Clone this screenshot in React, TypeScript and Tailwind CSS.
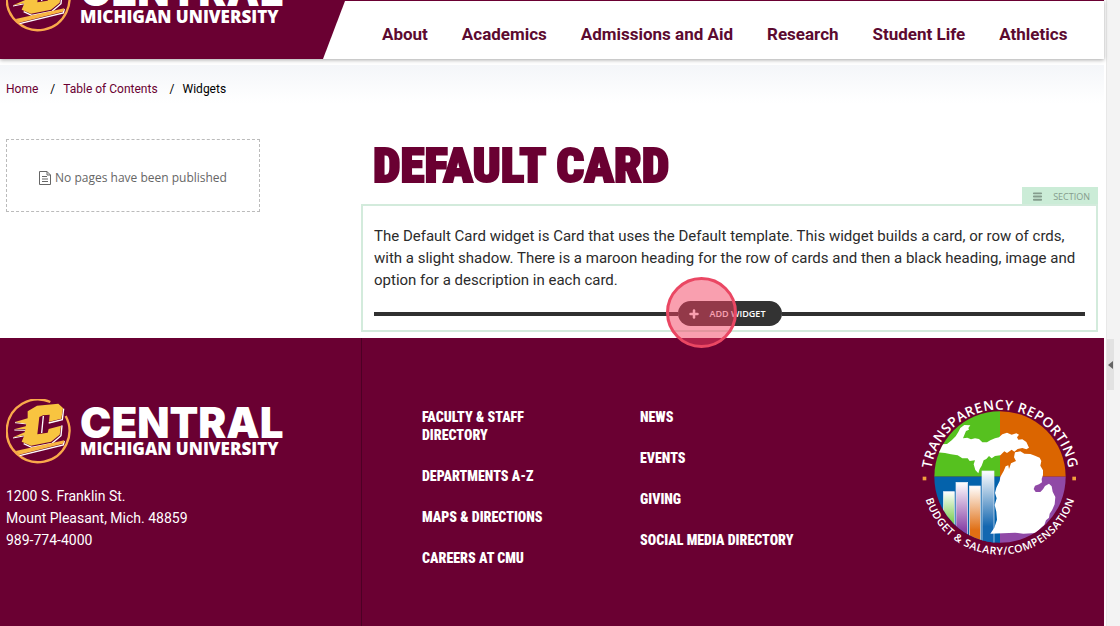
import React from 'react';
import { Menu, Plus } from 'lucide-react';

const navItems = ['About', 'Academics', 'Admissions and Aid', 'Research', 'Student Life', 'Athletics'];

const footerLinks = [
  ['Faculty & Staff Directory', 'Departments A-Z', 'Maps & Directions', 'Careers at CMU'],
  ['News', 'Events', 'Giving', 'Social Media Directory'],
];

const Logo = () => (
  <a href="#" className="flex h-[66px] items-center gap-2 text-white">
    <svg viewBox="19 11 198 198" className="size-[66px] shrink-0" aria-hidden="true">
      {/* Ring, open at the top right */}
      <path
        d="M 152 20 A 94 94 0 1 0 198 62"
        fill="none"
        stroke="#f9a94b"
        strokeWidth="7"
      />
      {/* White drop lines behind the letter */}
      <g fill="none" stroke="#fff" strokeWidth="4">
        <path d="M192 40 L188 73 L147 83 M126 113 L131 62 M187 90 L184 121 L157 144 L96 156 L72 145" />
        <path d="M46 82 L84 86 M44 104 L80 105 M40 128 L76 121" strokeWidth="3" />
        <path d="M60 181 L191 149 L194 137" />
      </g>
      <path
        d="M84 48 L112 31 L176 25 L190 38 L185 70 L148 79 L150 58 L130 60 L119 65 L113 117 L144 112 L147 101 L184 91 L180 118 L154 139 L94 151 L66 139 L74 120 L40 126 L75 111 L77 101 L43 102 L78 93 L80 85 L46 80 L84 69 Z"
        fill="#f8c440"
      />
      <path d="M48 167 L194 135 L190 145 L58 178 Z" fill="#f8b643" />
    </svg>
    <span className="flex flex-col whitespace-nowrap">
      <span className="font-[Inter] text-[42px] leading-[34px] font-black">CENTRAL</span>
      <span className="font-['Open_Sans'] text-[17px] leading-[18px] font-extrabold">MICHIGAN UNIVERSITY</span>
    </span>
  </a>
);

const bars = [
  { x: 85, y: 290, w: 33, color: '#55c11d' },
  { x: 123, y: 262, w: 35, color: '#8a45a8' },
  { x: 163, y: 273, w: 33, color: '#e06f14' },
  { x: 201, y: 228, w: 36, color: '#1467b0' },
];

const TransparencySeal = () => (
  <svg viewBox="0 0 510 495" className="h-[165px] w-[170px]" role="img" aria-label="Transparency reporting">
    <defs>
      <clipPath id="seal">
        <circle cx="255" cy="246" r="197" />
      </clipPath>
      <path id="sealTop" d="M 47 252 A 208 208 0 0 1 463 252" />
      <path id="sealBottom" d="M 22 246 A 233 233 0 0 0 488 246" />
      {bars.map((b, i) => (
        <linearGradient key={b.x} id={`bar${i}`} x1="0" y1="0" x2="0" y2="1">
          <stop offset="0" stopColor="#fff" />
          <stop offset="0.75" stopColor={b.color} />
        </linearGradient>
      ))}
    </defs>
    <g clipPath="url(#seal)">
      <rect x="50" y="40" width="205" height="205" fill="#56c11f" />
      <rect x="255" y="40" width="205" height="205" fill="#db6500" />
      <rect x="50" y="245" width="205" height="205" fill="#0462ab" />
      <rect x="255" y="245" width="205" height="205" fill="#9049a6" />
      {bars.map((b, i) => (
        <rect
          key={b.x}
          x={b.x}
          y={b.y}
          width={b.w}
          height={450 - b.y}
          fill={`url(#bar${i})`}
          stroke="#e8eef8"
          strokeWidth="2"
        />
      ))}
      {/* Upper peninsula */}
      <path
        d="M62 158 L78 148 L96 147 L110 136 L122 124 L130 111 L136 99 L148 90 L166 91 L160 99 L162 104 L153 108 L148 120 L144 130 L157 128 L168 133 L180 130 L192 132 L202 142 L216 142 L226 136 L240 130 L252 127 L262 118 L276 113 L290 119 L304 115 L312 119 L306 127 L310 134 L322 133 L334 141 L342 158 L334 163 L322 159 L308 162 L298 170 L290 164 L276 174 L268 169 L256 181 L240 183 L230 190 L222 183 L214 192 L206 196 L200 212 L194 222 L190 235 L181 225 L176 208 L180 196 L164 198 L158 190 L142 190 L128 181 L108 178 L90 174 L66 172 Z"
        fill="#fff"
      />
      {/* Lower peninsula */}
      <path
        d="M300 172 L316 169 L328 176 L346 177 L360 182 L374 188 L379 198 L376 212 L384 226 L384 240 L380 252 L381 262 L372 268 L360 272 L356 282 L362 291 L376 291 L384 283 L390 273 L402 266 L410 274 L413 290 L421 306 L419 328 L411 346 L404 356 L402 368 L393 376 L388 390 L378 398 L364 414 L325 416 L300 413 L226 416 L238 398 L246 374 L244 350 L239 330 L245 310 L240 294 L244 278 L254 258 L256 246 L266 228 L272 214 L280 211 L282 222 L288 205 L303 198 L297 187 Z"
        fill="#fff"
      />
    </g>
    <rect x="23" y="245" width="11" height="11" fill="#f3a03d" />
    <rect x="472" y="245" width="11" height="11" fill="#f3a03d" />
    <g fill="#fff" className="font-['Open_Sans'] font-semibold tracking-widest" textAnchor="middle">
      <text fontSize="41">
        <textPath href="#sealTop" startOffset="50%">TRANSPARENCY REPORTING</textPath>
      </text>
      <text fontSize="32">
        <textPath href="#sealBottom" startOffset="50%">BUDGET &amp; SALARY/COMPENSATION</textPath>
      </text>
    </g>
  </svg>
);

const PageIcon = () => (
  <svg viewBox="0 0 12 14" className="h-3.5 w-3 shrink-0" fill="none" stroke="#666" aria-hidden="true">
    <path d="M0.5 0.5 H8 L11.5 4 V13.5 H0.5 Z M8 0.5 V4 H11.5 M3 5.5 H8 M3 8 H9 M3 10.5 H9" />
  </svg>
);

export default function App() {
  return (
    <div className="flex min-h-screen bg-white font-[Roboto,sans-serif] text-[#2b2b2b]">
      <div className="mr-0.5 flex min-w-0 flex-1 flex-col">
        <header className="relative h-[59px] shrink-0 bg-[#6a0032] shadow-[0_1px_4px_rgba(0,0,0,0.35)]">
          <div className="flex h-full items-end overflow-hidden">
            <div className="w-[323px] shrink-0 pb-[26px] pl-1.5">
              <Logo />
            </div>
            <nav className="flex h-[58px] flex-1 items-center gap-[34px] bg-white pt-2 pl-[59px] whitespace-nowrap [clip-path:polygon(22px_0,100%_0,100%_100%,0_100%)]">
              {navItems.map((item) => (
                <a key={item} href="#" className="text-[17px] leading-6 font-bold text-[#5c0a30]">
                  {item}
                </a>
              ))}
            </nav>
          </div>
        </header>

        <nav
          aria-label="Breadcrumb"
          className="mt-1.5 flex h-12 items-center bg-linear-to-b from-[#f4f6f9] to-white to-80% pl-1.5 text-[12px]"
        >
          <a href="#" className="text-[#6a0032]">Home</a>
          <span className="pr-2 pl-3 text-black">/</span>
          <a href="#" className="text-[#6a0032]">Table of Contents</a>
          <span className="pr-2 pl-3 text-black">/</span>
          <span className="text-black">Widgets</span>
        </nav>

        <main className="flex items-start pt-[26px] pr-1.5 pb-1.5">
          <aside className="w-[361px] shrink-0 pl-1.5">
            <div className="flex h-[73px] w-[254px] items-center justify-center gap-1 border border-dashed border-[#bbb] pt-1 font-['Open_Sans'] text-[12px] text-[#666]">
              <PageIcon />
              No pages have been published
            </div>
          </aside>

          <div className="min-w-0 flex-1">
            <h1 className="h-12 pl-3 font-['Roboto_Condensed',Roboto,sans-serif] text-[49px] leading-[54px] font-black text-[#6a0032] [-webkit-text-stroke:2px_#6a0032]">
              DEFAULT CARD
            </h1>
            <div className="flex justify-end">
              <div className="flex h-[17px] items-center gap-2.5 bg-[#cbecd7] pt-0.5 pr-2 pl-2.5 font-['Open_Sans'] text-[9px] font-medium text-[#859c8d]">
                <Menu size={11} strokeWidth={4} />
                SECTION
              </div>
            </div>
            <section className="border-2 border-[#d3ebdc] px-[11px] pt-[19px]">
              <p className="text-[15px] leading-[22px]">
                The Default Card widget is Card that uses the Default template. This widget builds a card, or row of crds,
                with a slight shadow. There is a maroon heading for the row of cards and then a black heading, image and
                option for a description in each card.
              </p>
              <div className="mt-2.5 flex items-center pb-1">
                <div className="h-1 flex-1 bg-[#303030]" />
                <div className="relative">
                  <button className="flex h-[25px] w-[104px] items-center gap-2.5 rounded-full bg-[#333] pl-2.5 font-['Open_Sans'] text-[9px] font-semibold whitespace-nowrap text-white">
                    <Plus size={12} strokeWidth={5} />
                    ADD WIDGET
                  </button>
                  <div className="pointer-events-none absolute -top-6 -left-3 size-[71px] rounded-full border-[3px] border-[#ea4763] bg-[#f33f5f]/50" />
                </div>
                <div className="h-1 flex-1 bg-[#303030]" />
              </div>
            </section>
          </div>
        </main>

        <footer className="flex flex-1 bg-[#6a0032] text-white">
          <div className="w-[362px] shrink-0 border-r border-[#4c0024] pt-[61px] pl-1.5">
            <Logo />
            <address className="mt-5 text-[14px] leading-[22px] not-italic">
              1200 S. Franklin St.
              <br />
              Mount Pleasant, Mich. 48859
              <br />
              989-774-4000
            </address>
          </div>
          <div className="flex flex-1 justify-between pr-[19px] pl-[60px]">
            <div className="flex gap-[68px] pt-[70px]">
              {footerLinks.map((links, i) => (
                <ul
                  key={i}
                  className="flex min-w-[150px] flex-col gap-[23px] font-['Roboto_Condensed',Roboto,sans-serif] text-[14px] leading-[18px] font-black uppercase first:w-[150px]"
                >
                  {links.map((link) => (
                    <li key={link}>
                      <a href="#">{link}</a>
                    </li>
                  ))}
                </ul>
              ))}
            </div>
            <a href="#" className="block pt-[57px]">
              <TransparencySeal />
            </a>
          </div>
        </footer>
      </div>

      <div className="w-3.5 shrink-0 border-l border-[#e8e8e8] bg-[#f3f3f3] pt-[339px]">
        <button
          aria-label="Open panel"
          className="flex h-[51px] w-[7px] items-center justify-center bg-[#e2e2e2]"
        >
          <svg viewBox="0 0 5 8" className="h-2 w-[5px]" aria-hidden="true">
            <path d="M5 0 V8 L0 4 Z" fill="#666" />
          </svg>
        </button>
      </div>
    </div>
  );
}
